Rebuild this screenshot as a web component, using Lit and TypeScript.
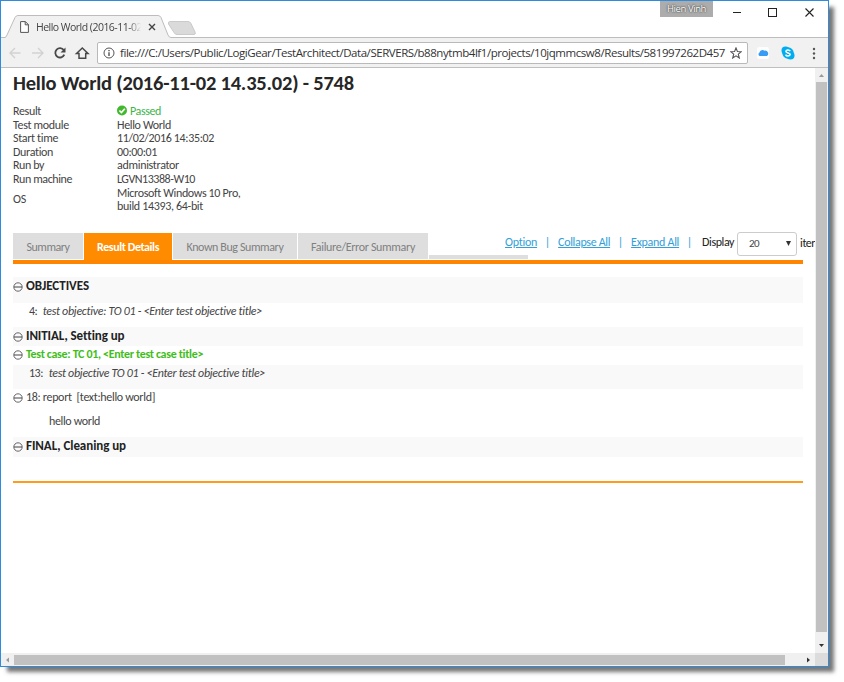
import { LitElement, html, css, svg } from "lit";
import { customElement, property } from "lit/decorators.js";

/** One line of text whose tracking is adjusted so that it spans a given width. */
@customElement("fit-text")
class FitText extends LitElement {
  @property({ type: Number }) w = 0;
  @property() text = "";
  static styles = css`
    :host { display: inline-block; white-space: pre; }
    .run { display: inline-block; }
    :host(.under) .run { text-decoration: underline; text-underline-offset: 1px; }
  `;
  render() {
    return html`<span class="run">${this.text}</span>`;
  }
  updated() {
    const run = this.renderRoot.querySelector(".run") as HTMLElement;
    run.style.letterSpacing = "0px";
    const natural = run.getBoundingClientRect().width;
    const gap = (this.w - natural) / this.text.length;
    run.style.letterSpacing = gap + "px";
  }
}

const t = (text: string, w: number) => html`<fit-text .text=${text} .w=${w}></fit-text>`;
const link = (text: string, w: number) => html`<fit-text class="under" .text=${text} .w=${w}></fit-text>`;

const info: [string, number, string, number][] = [
  ["Test module", 56, "Hello World", 54],
  ["Start time", 45, "11/02/2016 14:35:02", 97],
  ["Duration", 40, "00:00:01", 40],
  ["Run by", 31, "administrator", 62],
  ["Run machine", 59, "LGVN13388-W10", 78],
];

const collapse = svg`<svg class="knob" width="10" height="10" viewBox="0 0 10 10">
  <circle cx="5" cy="5" r="4.2" fill="none" stroke="#555" stroke-width=".9"/>
  <path d="M1 5h8" stroke="#444" stroke-width="1"/></svg>`;

@customElement("app-root")
class AppRoot extends LitElement {
  static styles = css`
    :host { display: block; width: 844px; height: 682px; overflow: hidden; background: #fff;
      font: 11px/13.6px "Open Sans", "Noto Sans", sans-serif; color: #444; }
    * { box-sizing: border-box; }
    svg { display: block; flex: none; }
    .window { width: 829px; height: 667px; border: 1px solid #2f8bdc; background: #fff;
      box-shadow: 6px 6px 4px -1px #777; display: flex; flex-direction: column; }
    .strip { height: 37px; flex: none; display: flex; position: relative; }
    .frame { position: absolute; left: 0; top: 14px; }
    .tab { display: flex; align-items: center; margin: 16px 0 0 19px; height: 20px; width: 146px; color: #444; font-size: 10.5px; }
    .tab .name { margin-left: 7px; width: 105px; overflow: hidden; line-height: 18px; display: flex;
      -webkit-mask-image: linear-gradient(90deg, #000 88%, transparent); z-index: 1; }
    .tab svg { z-index: 1; }
    .tab .close { margin-left: 7px; }
    .user { margin-left: 494px; width: 53px; height: 16px; background: #acacac; color: #fff; font-size: 9.5px; line-height: 15px;
      text-align: center; text-shadow: 0 0 2px #333, 0 0 1px #555; }
    .controls { margin: 6px 0 0 19px; }
    .toolbar { height: 30px; flex: none; background: #f1f1f1; border-bottom: 1px solid #bfbfbf; display: flex; align-items: center; padding-left: 6px; }
    .url { width: 651px; height: 22px; margin-left: 7px; background: #fff; border: 1px solid #b9b9b9; border-radius: 2px;
      display: flex; align-items: center; padding-left: 5px; color: #333; font-size: 11.5px; }
    .url fit-text { margin-left: 5px; width: 610px; line-height: 18px; }
    .exts { margin-left: 8px; }
    .body { flex: 1; min-height: 0; display: grid; grid-template-columns: 814px 13px; grid-template-rows: 585px 13px; }
    .page { overflow: hidden; padding-left: 12px; font-family: Carlito, Lato, "Open Sans", sans-serif; font-size: 12px; }
    .title { font-size: 20.5px; font-weight: 700; line-height: 24px; margin: 3px 0 0; height: 34px; color: #262626; }
    .info { display: grid; grid-template-columns: 104px auto; grid-template-rows: repeat(6, 13.6px) 27.2px; align-items: center; }
    .ok { display: flex; align-items: center; color: #3cb54a; gap: 3px; }
    .ok svg { margin-top: -3px; }
    .nav { display: flex; height: 31px; margin-top: 19.2px; width: 802px; position: relative; }
    .nav::after { content: ""; position: absolute; left: 0; bottom: 0; width: 790px; height: 3.5px; background: #ff8500; }
    .item { height: 26px; background: #dedede; color: #808080; margin-right: 1px; line-height: 28px; text-align: center; flex: none; }
    .w70 { width: 70px; } .w88 { width: 88px; } .w124 { width: 124px; } .w130 { width: 130px; }
    .item.on { height: 31px; background: #ff8c00; color: #fff; font-weight: 700; }
    .stub { width: 99px; height: 4px; margin-top: 22px; background: #dedede; flex: none; }
    .links { display: flex; margin-left: -23px; height: 19px; align-items: center; color: #32a0d8; flex: none; }
    .links .bar { width: 21px; text-align: center; }
    .links .disp { color: #222; margin: 1px 0 0 2px; }
    .select { width: 60px; height: 24px; border: 1px solid #ccc; border-radius: 3px; display: flex; align-items: center;
      justify-content: space-between; padding: 0 5px 0 11px; color: #444; font-size: 11px; margin: -1px 3px 0 3px; flex: none; }
    .more { line-height: 20px; color: #222; flex: none; white-space: pre; }
    .rows { width: 790px; margin-top: 13px; }
    .row { display: flex; line-height: 18px; color: #444; }
    .row fit-text { margin-left: 3px; }
    .knob { margin-top: 5px; }
    .shade { background: #f9f9f9; }
    .head { font-weight: 700; color: #222; font-size: 13px; }
    .case { font-weight: 700; color: #41bd1a; line-height: 17px; }
    .case .knob { margin-top: 4px; }
    .step { line-height: 17px; }
    .step .knob { margin-top: 4px; }
    .i { font-style: italic; }
    .r26 { height: 26px; } .r24 { height: 24px; } .r19 { height: 19px; } .r20 { height: 20px; }
    .n1 { padding: 0 0 0 13px; line-height: 16px; } .n2 { padding-left: 33px; line-height: 16px; }
    .end { height: 2px; background: #ff9c1c; margin-top: 24px; width: 790px; }
    .vbar, .hbar { background: #f0f0f0; display: flex; align-items: center; }
    .vbar { flex-direction: column; }
    .vthumb { width: 11px; height: 550px; background: #c1c1c1; }
    .hthumb { height: 10px; width: 771px; background: #c1c1c1; }
    .corner { background: #dcdcdc; }
  `;

  render() {
    return html`<div class="window">
      <div class="strip">
        <svg class="frame" width="827" height="24" viewBox="0 0 827 24">
          <path d="M0 22.500H4Q5 22.500 6 20L14 2.500Q15 .5 17 .5H157Q159 .5 160 2.500L167 20Q168 22.500 170 22.500H827V24H0Z" fill="#f1f1f1"/>
          <path d="M0 22.500H4Q5 22.500 6 20L14 2.500Q15 .5 17 .5H157Q159 .5 160 2.500L167 20Q168 22.500 170 22.500H827" fill="none" stroke="#bdbdbd"/>
          <path d="M168.500 6.500H187Q189 6.500 190 8.500L194 17Q195 19.500 193 19.500H176Q174 19.500 173 17.500L167.500 9Q167 6.500 168.500 6.500Z" fill="#dadada" stroke="#cacaca"/>
        </svg>
        <div class="tab">
          <svg width="9" height="12" viewBox="0 0 9 12"><path d="M.6.6H5.400L8.400 3.600V11.400H.6ZM5.200.6V3.800H8.400" fill="#fff" stroke="#555" stroke-width="1"/></svg>
          <div class="name">${t("Hello World (2016-11-02", 106)}</div>
          <svg class="close" width="8" height="8" viewBox="0 0 8 8"><path d="M1 1 7 7M7 1 1 7" stroke="#444" stroke-width="1.400"/></svg>
        </div>
        <div class="user">${t("Hien Vinh", 39)}</div>
        <svg class="controls" width="84" height="12" viewBox="0 0 84 12">
          <path d="M1 5.500H9" stroke="#222"/><rect x="36.500" y="1.500" width="8" height="8" fill="none" stroke="#222"/>
          <path d="M73.500 1.500 81.500 9.500M81.500 1.500 73.500 9.500" stroke="#222" stroke-width="1.100"/>
        </svg>
      </div>
      <div class="toolbar">
        <svg width="83" height="16" viewBox="0 0 83 16" fill="none">
          <path d="M13.500 8H3.500M8 3 3 8 8 13M25 8H35.500M31 3 36 8 31 13" stroke="#d2d2d2" stroke-width="1.400"/>
          <path d="M56.800 5A4.700 4.700 0 1 0 57.300 9.700" stroke="#484848" stroke-width="1.800"/>
          <path d="M58.500 2.500V7.500H53.500Z" fill="#484848"/>
          <path d="M69.500 8.500 75.300 3 81 8.500H78.700V13.300H72V8.500Z" stroke="#484848" stroke-width="1.500"/>
        </svg>
        <div class="url">
          <svg width="12" height="12" viewBox="0 0 12 12"><circle cx="6" cy="6" r="5" fill="none" stroke="#555"/><path d="M6 5.200V9M6 3V4.300" stroke="#444" stroke-width="1.300"/></svg>
          ${t("file:///C:/Users/Public/LogiGear/TestArchitect/Data/SERVERS/b88nytmb4lf1/projects/10jqmmcsw8/Results/581997262D457", 605)}
          <svg width="12" height="12" viewBox="0 0 12 12"><path d="M6 .9 7.400 4.500 11.300 4.700 8.300 7.200 9.300 11 6 8.900 2.700 11 3.700 7.200.7 4.700 4.600 4.500Z" fill="none" stroke="#555" stroke-width="1.100"/></svg>
        </div>
        <svg class="exts" width="68" height="16" viewBox="0 0 68 16">
          <rect x="1" y="2" width="12" height="12" rx="2" fill="#fdfdfd"/>
          <path d="M3.500 11A2 2 0 0 1 3.500 7.500 3.200 3.200 0 0 1 8.500 5.700 3 3 0 0 1 11 11Z" fill="#389cf5"/>
          <circle cx="29.500" cy="5.500" r="4" fill="#00adef"/><circle cx="34.500" cy="10.500" r="4" fill="#00adef"/><circle cx="32" cy="8" r="5.700" fill="#00adef"/>
          <path d="M34.300 6.100C33 4.200 29.800 4.700 29.900 6.500 30 8.400 34.400 7.400 34.200 9.500 34 11.400 30.400 11.500 29.600 9.600" fill="none" stroke="#fff" stroke-width="1.500"/>
          <g fill="#555"><circle cx="58" cy="4" r="1.200"/><circle cx="58" cy="8.500" r="1.200"/><circle cx="58" cy="13" r="1.200"/></g>
        </svg>
      </div>
      <div class="body">
        <div class="page">
          <div class="title">${t("Hello World (2016-11-02 14.35.02) - 5748", 341)}</div>
          <div class="info">
            <div>${t("Result", 28)}</div>
            <div class="ok"><svg width="10" height="11" viewBox="0 0 10 11"><circle cx="5" cy="5.500" r="5" fill="#42b82d"/><path d="M2.400 5.500 4.400 7.500 7.800 3.700" fill="none" stroke="#fff" stroke-width="1.700"/></svg>${t("Passed", 31)}</div>
            ${info.map(([k, a, v, b]) => html`<div>${t(k, a)}</div><div>${t(v, b)}</div>`)}
            <div>${t("OS", 13)}</div>
            <div>${t("Microsoft Windows 10 Pro,", 123)}<br />${t("build 14393, 64-bit", 86)}</div>
          </div>
          <div class="nav">
            <div class="item w70">${t("Summary", 43)}</div>
            <div class="item w88 on">${t("Result Details", 62)}</div>
            <div class="item w124">${t("Known Bug Summary", 97)}</div>
            <div class="item w130">${t("Failure/Error Summary", 104)}</div>
            <div class="stub"></div>
            <div class="links">
              ${link("Option", 32)}<span class="bar">|</span>
              ${link("Collapse All", 52)}<span class="bar">|</span>
              ${link("Expand All", 48)}<span class="bar">|</span>
              <span class="disp">${t("Display", 32)}</span>
            </div>
            <div class="select">${t("20", 10)}<svg width="5" height="5" viewBox="0 0 5 5"><path d="M0 0H5L2.500 5Z" fill="#333"/></svg></div>
            <div class="more">${t("iter", 15)}</div>
          </div>
          <div class="rows">
            <div class="row shade head r26">${collapse}${t("OBJECTIVES", 63)}</div>
            <div class="row n1 r24">${t("4:", 8)}<span class="i">&nbsp;${t("test objective: TO 01 - <Enter test objective title>", 219)}</span></div>
            <div class="row shade head r19">${collapse}${t("INITIAL, Setting up", 98)}</div>
            <div class="row case r19">${collapse}${t("Test case: TC 01, <Enter test case title>", 177)}</div>
            <div class="row shade n1 r24">${t("13:", 14)}<span class="i">&nbsp;${t("test objective TO 01 - <Enter test objective title>", 216)}</span></div>
            <div class="row step r24">${collapse}${t("18: report  [text:hello world]", 129)}</div>
            <div class="row n2 r24">${t("hello world", 51)}</div>
            <div class="row shade head r20">${collapse}${t("FINAL, Cleaning up", 100)}</div>
          </div>
          <div class="end"></div>
        </div>
        <div class="vbar">
          <svg width="13" height="14" viewBox="0 0 13 14"><path d="M4 9H9L6.500 6Z" fill="#999"/></svg>
          <div class="vthumb"></div>
          <svg width="13" height="21" viewBox="0 0 13 21"><path d="M4 12H9L6.500 15Z" fill="#333"/></svg>
        </div>
        <div class="hbar">
          <svg width="13" height="12" viewBox="0 0 13 12"><path d="M8 3.500V8.500L5 6Z" fill="#999"/></svg>
          <div class="hthumb"></div>
          <svg width="30" height="12" viewBox="0 0 30 12"><path d="M22 3.500V8.500L25 6Z" fill="#333"/></svg>
        </div>
        <div class="corner"></div>
      </div>
    </div>`;
  }
}
